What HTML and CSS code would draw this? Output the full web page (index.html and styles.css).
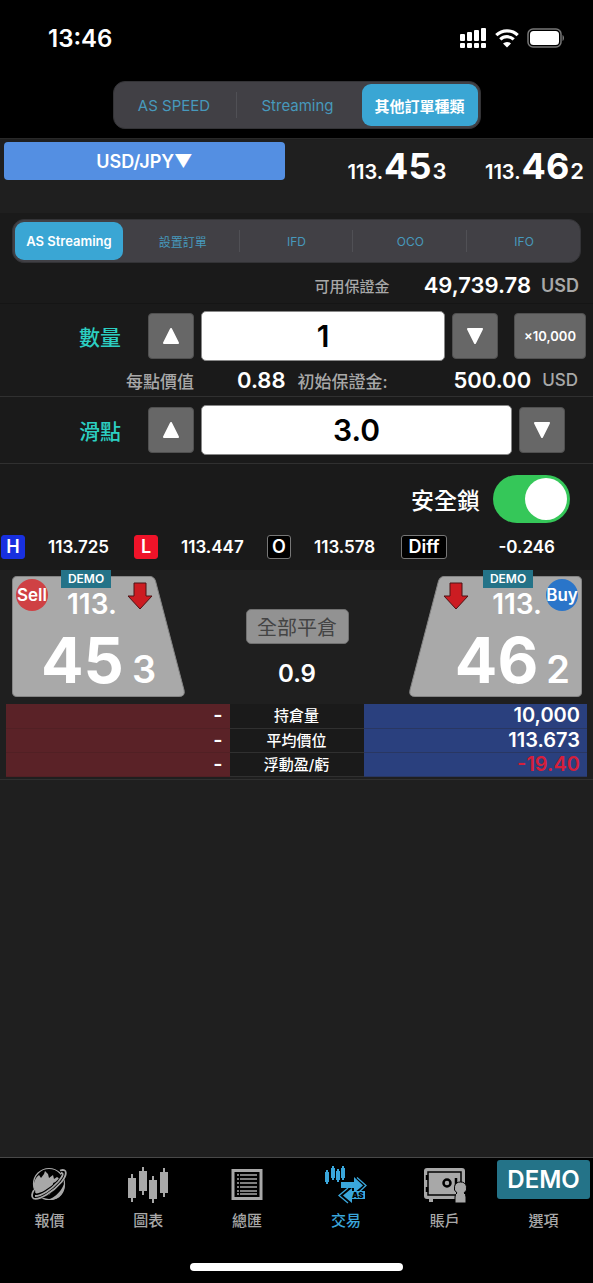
FILE: index.html
```html
<!DOCTYPE html>
<html lang="zh-Hant">
<head>
<meta charset="utf-8">
<meta name="viewport" content="width=device-width, initial-scale=1">
<title>交易</title>
<link rel="stylesheet" href="styles.css">
</head>
<body>
<div class="app">
  <header class="topbar">
    <div class="status">
      <time class="clock">13:46</time>
      <div class="status-icons">
        <svg width="27" height="22" viewBox="0 0 27 22" fill="#fff" aria-hidden="true">
          <rect x="0" y="7" width="5" height="7" rx="1"/><rect x="7" y="5" width="5" height="9" rx="1"/><rect x="14" y="3" width="5" height="11" rx="1"/><rect x="21" y="1" width="5" height="13" rx="1"/>
          <rect x="0" y="16" width="5" height="5" rx="1"/><rect x="7" y="16" width="5" height="5" rx="1"/><rect x="14" y="16" width="5" height="5" rx="1"/><rect x="21" y="16" width="5" height="5" rx="1"/>
        </svg>
        <svg width="24" height="20" viewBox="0 0 24 20" aria-hidden="true">
          <path d="M1.3 7.2a15.5 15.5 0 0 1 21.4 0M5.3 11.4a9.7 9.7 0 0 1 13.4 0" fill="none" stroke="#fff" stroke-width="3.2"/>
          <path d="M12 19.6l-4-4a5.7 5.7 0 0 1 8 0z" fill="#fff"/>
        </svg>
        <svg width="38" height="20" viewBox="0 0 38 20" aria-hidden="true">
          <rect x="1" y="1" width="33" height="18" rx="5" fill="none" stroke="#777" stroke-width="1.5"/>
          <rect x="3" y="3" width="29" height="14" rx="3.5" fill="#fff"/>
          <path d="M35.5 7v6c2-1 2-5 0-6z" fill="#777"/>
        </svg>
      </div>
    </div>
    <nav class="segments segments-main">
      <button type="button">AS SPEED</button>
      <button type="button">Streaming</button>
      <button type="button" class="active">其他訂單種類</button>
    </nav>
  </header>

  <section class="quote">
    <select class="pair" aria-label="貨幣對"><option>USD/JPY▼</option></select>
    <div class="price">113.<b>45</b><i>3</i></div>
    <div class="price">113.<b>46</b><i>2</i></div>
  </section>

  <main class="order">
    <nav class="segments segments-order">
      <button type="button" class="active">AS Streaming</button>
      <button type="button">設置訂單</button>
      <button type="button">IFD</button>
      <button type="button">OCO</button>
      <button type="button">IFO</button>
    </nav>
    <div class="margin">
      <span class="caption">可用保證金</span>
      <strong class="amount">49,739.78</strong>
      <span class="currency">USD</span>
    </div>

    <div class="field-row">
      <label class="field-label" for="qty">數量</label>
      <button type="button" class="step" aria-label="增加數量"><svg width="18" height="18" viewBox="0 0 18 18"><path d="M9 2l7 14H2z"/></svg></button>
      <input class="field" id="qty" type="text" value="1">
      <button type="button" class="step" aria-label="減少數量"><svg width="18" height="18" viewBox="0 0 18 18"><path d="M9 16l7-14H2z"/></svg></button>
      <button type="button" class="step unit">×10,000</button>
    </div>
    <div class="details">
      <span class="caption pip">每點價值</span>
      <strong class="amount pip-value">0.88</strong>
      <span class="caption">初始保證金:</span>
      <strong class="amount initial">500.00</strong>
      <span class="currency">USD</span>
    </div>

    <div class="field-row slip">
      <label class="field-label" for="slip">滑點</label>
      <button type="button" class="step" aria-label="增加滑點"><svg width="18" height="18" viewBox="0 0 18 18"><path d="M9 2l7 14H2z"/></svg></button>
      <input class="field" id="slip" type="text" value="3.0">
      <button type="button" class="step" aria-label="減少滑點"><svg width="18" height="18" viewBox="0 0 18 18"><path d="M9 16l7-14H2z"/></svg></button>
    </div>

    <div class="lock">
      <label for="lock">安全鎖</label>
      <input id="lock" class="switch" type="checkbox" checked>
    </div>

    <div class="stats">
      <div class="stat"><span class="tag high">H</span><span>113.725</span></div>
      <div class="stat"><span class="tag low">L</span><span>113.447</span></div>
      <div class="stat"><span class="tag">O</span><span>113.578</span></div>
      <div class="stat change"><span class="tag diff">Diff</span><span>-0.246</span></div>
    </div>
  </main>

  <section class="deal">
    <button type="button" class="ticket sell">
      <svg class="shape" viewBox="0 0 173 121" preserveAspectRatio="none" aria-hidden="true"><path d="M5 0.500H138Q142 0.500 143.500 5L172 114Q173.500 120.500 167 120.500H5Q0.500 120.500 0.500 116V5Q0.500 0.500 5 0.500Z"/></svg>
      <span class="demo">DEMO</span>
      <span class="ticket-top"><span class="side">Sell</span><span class="handle">113.</span>
        <svg class="arrow" width="26" height="28" viewBox="0 0 26 28"><path d="M7 1H19V14H25L13 27L1 14H7Z"/></svg></span>
      <span class="ticket-price"><b>45</b><i>3</i></span>
    </button>
    <div class="center">
      <button type="button" class="close-all">全部平倉</button>
      <span class="spread">0.9</span>
    </div>
    <button type="button" class="ticket buy">
      <svg class="shape" viewBox="0 0 173 121" preserveAspectRatio="none" aria-hidden="true"><path d="M168 0.500H35Q31 0.500 29.500 5L1 114Q-0.500 120.500 6 120.500H168Q172.500 120.500 172.500 116V5Q172.500 0.500 168 0.500Z"/></svg>
      <span class="demo">DEMO</span>
      <span class="ticket-top"><svg class="arrow" width="26" height="28" viewBox="0 0 26 28"><path d="M7 1H19V14H25L13 27L1 14H7Z"/></svg>
        <span class="handle">113.</span><span class="side">Buy</span></span>
      <span class="ticket-price"><b>46</b><i>2</i></span>
    </button>
  </section>

  <section class="holdings">
    <table>
      <tr><td class="short">-</td><th>持倉量</th><td class="long">10,000</td></tr>
      <tr><td class="short">-</td><th>平均價位</th><td class="long">113.673</td></tr>
      <tr><td class="short">-</td><th>浮動盈/虧</th><td class="long loss">-19.40</td></tr>
    </table>
  </section>

  <footer class="tabbar">
    <nav class="tabs">
      <a href="#quotes"><svg width="38" height="38" viewBox="0 0 38 38" fill="none" stroke="currentColor" aria-hidden="true">
        <circle cx="19" cy="18" r="15.500" stroke-width="1.200"/>
        <path d="M4 22C3 16 6 11 9 9L11 12L14 8L15 5L18 8L19 12L23 9L24 13L27 11L30 13L29 17L26 16L23 17L24 21L27 22L19 29L8 32Z" fill="currentColor" stroke="none"/>
        <path d="M18 34C26 31 32 24 34.500 17C36 27 29 35 18 34Z" fill="currentColor" stroke="none"/>
        <path d="M30 4.500C38 2 36 9 31 16C23 26 9 34 3.500 32C1 30.500 2 27 4 24M31 7C35 5 33 10 29 15C21 24 10 30 5 29" stroke="#000" stroke-width="3.500"/>
        <path d="M30 4.500C38 2 37 9 31.500 16C23 26 9 34.500 3.500 32.500C1 31 2 27 4 24M5 30C11 30 21 24 28.500 15.500C33 10 34 7 31 7" stroke-width="1.800"/>
      </svg><span>報價</span></a>
      <a href="#charts"><svg width="42" height="38" viewBox="0 0 42 38" fill="currentColor" aria-hidden="true">
        <rect x="1" y="12" width="8" height="20"/><rect x="4" y="8" width="2" height="28"/>
        <rect x="12" y="5" width="8" height="20"/><rect x="15" y="1" width="2" height="28"/>
        <rect x="22" y="14" width="8" height="19"/><rect x="25" y="10" width="2" height="27"/>
        <rect x="33" y="6" width="8" height="21"/><rect x="36" y="2" width="2" height="29"/>
      </svg><span>圖表</span></a>
      <a href="#summary"><svg width="32" height="38" viewBox="0 0 32 38" aria-hidden="true">
        <rect x="2" y="4.500" width="28" height="28" fill="none" stroke="currentColor" stroke-width="3"/>
        <path d="M6 9H8M6 13H8M6 17H8M6 21H8M6 25H8M6 28H8M9 9H26M9 13H26M9 17H26M9 21H26M9 25H26M9 28H26" stroke="currentColor" stroke-width="1.500"/>
      </svg><span>總匯</span></a>
      <a href="#trade" class="current"><svg width="44" height="38" viewBox="0 0 44 38" fill="currentColor" aria-hidden="true">
        <rect x="1" y="6" width="4" height="10"/><rect x="2" y="4" width="2" height="14"/>
        <rect x="7" y="2" width="4" height="10"/><rect x="8" y="0" width="2" height="14"/>
        <rect x="12" y="5" width="4" height="9"/><rect x="13" y="3" width="2" height="13"/>
        <rect x="17" y="2" width="4" height="10"/><rect x="18" y="0" width="2" height="14"/>
        <path d="M17 16H30V11L39 19.500L30 27V22H17Z"/>
        <path d="M33 11.500L42 19.500L34 27" fill="none" stroke="currentColor" stroke-width="1.300"/>
        <path d="M41 25V33H28V37L19 29.500L28 22V25Z"/>
        <path d="M24 22L15 29.500L24 37" fill="none" stroke="currentColor" stroke-width="1.300"/>
        <text x="28" y="32" class="icon-text">AS</text>
      </svg><span>交易</span></a>
      <a href="#account"><svg width="44" height="38" viewBox="0 0 44 38" aria-hidden="true">
        <path d="M4 2H39Q42 2 42 5V33H10V36H6V33H4Q1 33 1 30V5Q1 2 4 2Z" fill="currentColor"/>
        <rect x="5" y="6" width="33" height="23" fill="none" stroke="#000" stroke-width="1.500"/>
        <path d="M4 9V14M4 21V26M33 12V20" stroke="#000" stroke-width="2.500"/>
        <circle cx="24" cy="17" r="3.500" fill="none" stroke="#000" stroke-width="2.500"/>
        <path d="M37.500 16A6 6 0 0 1 41 27Q43 28 43 31V37H32V31Q32 28 34 27A6 6 0 0 1 37.500 16Z" fill="currentColor" stroke="#000" stroke-width="1"/>
      </svg><span>賬戶</span></a>
      <a href="#options"><strong class="demo-icon">DEMO</strong><span>選項</span></a>
    </nav>
    <div class="home"></div>
  </footer>
</div>
</body>
</html>
```
FILE: styles.css
```css
* { box-sizing: border-box; }
body {
  margin: 0;
  background: #1f1f1f;
  color: #fff;
  font-family: Inter, "Noto Sans CJK TC", sans-serif;
  font-size: 16px;
}
button, input, select { margin: 0; padding: 0; border: 0; font: inherit; color: inherit; }
b, i { font-style: normal; font-weight: inherit; }
.app { display: flex; flex-direction: column; min-height: 100vh; }

.topbar { display: flex; flex-direction: column; align-items: center; background: #000; padding-bottom: 9px; }
.status { display: flex; align-items: center; justify-content: space-between; width: 100%; height: 76px; padding: 0 28px 0 48px; }
.clock { font-size: 24px; font-weight: 600; }
.status-icons { display: flex; align-items: center; gap: 8px; }

.segments { display: grid; background: #414045; border: 1px solid #333336; color: #4799bc; }
.segments button { position: relative; background: none; border-radius: 9px; white-space: nowrap; }
.segments button.active { background: #3aa6d4; color: #fff; font-weight: 600; }
.segments button:not(.active):not(:last-child)::after { content: ""; position: absolute; right: -3px; top: 20%; bottom: 20%; width: 1px; background: #505055; }
.segments-main { grid-template-columns: 119px 120px 116px; gap: 4px; height: 48px; margin-top: 5px; padding: 2px 2px 2px 1px; border-radius: 12px; font-size: 15px; }
.segments-main button:nth-child(2)::after { display: none; }
.segments-order { grid-template-columns: repeat(5, 1fr); gap: 6px; height: 44px; margin: 0 12px; padding: 2px; border-radius: 12px; font-size: 12px; }
.segments-order .active { font-size: 13px; }

.quote { display: flex; justify-content: space-between; align-items: flex-start; height: 75px; padding: 3px 9px 0 4px; border-top: 1px solid #292929; }
.pair { flex: 0 0 281px; height: 38px; border-radius: 4px; appearance: none; background: #548fe2; font-size: 18px; font-weight: 600; text-align: center; text-align-last: center; }
.price { display: flex; align-items: baseline; gap: 1px; line-height: 48px; font-size: 20px; font-weight: 600; }
.pair + .price { margin-left: 24px; }
.price b { font-size: 36px; font-weight: 700; }
.price i { font-size: 22px; }

.order { background: #1a1a1a; padding-top: 6px; }
.margin, .details { display: flex; align-items: center; }
.margin { justify-content: flex-end; height: 41px; padding: 4px 14px 0 0; border-bottom: 1px solid #151515; }
.caption { font-size: 15px; color: #a8a8a8; font-weight: 500; }
.amount { font-size: 22px; font-weight: 600; }
.margin .amount { margin: 0 10px 0 34px; }
.currency { font-size: 18px; font-weight: 600; color: #a8a8a8; }

.field-row { display: flex; align-items: center; gap: 7px; padding: 7px 7px 0 0; }
.field-label { flex: 0 0 141px; padding-right: 20px; text-align: right; font-size: 21px; font-weight: 500; color: #2ccfc2; }
.step { display: flex; align-items: center; justify-content: center; flex: 0 0 46px; height: 46px; border: 1px solid #505050; border-radius: 4px; background: #676767; }
.step svg { fill: #fff; stroke: #fff; stroke-width: 2; stroke-linejoin: round; }
.step.unit { flex-basis: 72px; margin-left: 9px; font-size: 13px; font-weight: 600; }
.field { flex: 1; min-width: 0; height: 50px; border: 1px solid #888; border-radius: 5px; background: #fff; color: #000; text-align: center; font-size: 30px; font-weight: 600; }
.details { height: 36px; padding: 3px 15px 0 126px; border-bottom: 1px solid #303030; }
.details .caption { font-size: 17px; }
.pip-value { margin: 0 12px 0 43px; }
.initial { margin: 0 11px 0 auto; }
.details .currency { font-size: 17px; font-weight: 500; }
.slip { padding: 8px 28px 8px 0; border-bottom: 1px solid #303030; }

.lock { display: flex; align-items: center; justify-content: flex-end; gap: 13px; height: 70px; padding: 0 23px 0 0; font-size: 23px; font-weight: 500; }
.switch { appearance: none; width: 77px; height: 48px; padding: 3px; border-radius: 24px; background: #555; }
.switch:checked { background: #35c759; }
.switch::before { content: ""; display: block; width: 42px; height: 42px; border-radius: 50%; background: #fff; }
.switch:checked::before { margin-left: auto; }

.stats { display: grid; grid-template-columns: 133fr 133fr 134fr 192fr; height: 36px; padding: 0 0 11px 1px; font-size: 17px; font-weight: 600; }
.stat { display: flex; align-items: center; gap: 23px; }
.change { justify-content: space-between; padding-right: 38px; }
.tag { display: flex; align-items: center; justify-content: center; flex: 0 0 24px; height: 24px; border: 1px solid #777; border-radius: 3px; background: #000; font-size: 18px; }
.tag.high { background: #1830df; border-color: #1830df; }
.tag.low { background: #ef1329; border-color: #ef1329; }
.tag.diff { flex-basis: 46px; }

.deal { display: flex; justify-content: space-between; padding: 6px 11px 7px 12px; }
.ticket { position: relative; display: flex; flex-direction: column; width: 173px; height: 121px; background: none; color: #fff; }
.shape { position: absolute; inset: 0; width: 100%; height: 100%; }
.shape path { fill: #a9a9a9; stroke: #858585; }
.demo { position: absolute; top: -6px; left: 49px; width: 50px; background: #247388; font-size: 12px; font-weight: 600; line-height: 18px; text-align: center; }
.buy .demo { left: 74px; }
.ticket-top { position: relative; display: flex; align-items: flex-start; width: 100%; height: 46px; padding: 3px 0 0 4px; }
.side { display: flex; align-items: center; justify-content: center; flex: 0 0 32px; height: 32px; border-radius: 50%; background: #cf4144; font-size: 17px; font-weight: 600; }
.buy .side { background: #2a75c9; }
.handle { padding-top: 8px; font-size: 28px; font-weight: 600; line-height: 34px; }
.sell .handle { margin-left: 19px; }
.sell .arrow { margin: 3px 0 0 10px; }
.buy .ticket-top { justify-content: flex-end; padding: 3px 4px 0 0; }
.buy .handle { margin: 0 4px 0 23px; }
.buy .arrow { margin-top: 3px; }
.arrow { fill: #cc1c22; stroke: #4d1214; stroke-width: 1; }
.ticket-price { position: relative; display: flex; align-items: baseline; gap: 8px; width: 100%; padding: 0 29px; font-size: 38px; font-weight: 600; line-height: 78px; }
.ticket-price b { font-size: 63px; font-weight: 700; }
.buy .ticket-price { justify-content: flex-end; padding: 0 12px; }
.center { display: flex; flex-direction: column; align-items: center; gap: 15px; padding-top: 33px; }
.close-all { width: 103px; height: 35px; border: 1px solid #707070; border-radius: 5px; background: #929292; color: #444; font-size: 20px; }
.spread { font-size: 24px; font-weight: 600; line-height: 30px; }

.holdings { padding: 0 6px 2px; border-bottom: 1px solid #303030; }
table { width: 100%; table-layout: fixed; border-collapse: collapse; }
td, th { height: 24px; padding: 0 7px; border-bottom: 1px solid #303030; line-height: 23px; }
th { width: 134px; padding: 0; background: #1a1a1a; font-size: 15px; font-weight: 500; }
td { text-align: right; font-size: 20px; font-weight: 600; }
.short { background: #5a2227; border-color: #512024; }
.long { background: #2a407e; border-color: #293762; }
.loss { color: #d51f3b; }

.tabbar { margin-top: auto; background: #000; border-top: 1px solid #484848; padding-bottom: 12px; }
.tabs { display: grid; grid-template-columns: repeat(6, 1fr); height: 105px; padding-top: 2px; }
.tabs a { display: flex; flex-direction: column; align-items: center; gap: 7px; color: #a8a8a8; text-decoration: none; font-size: 15px; font-weight: 500; line-height: 20px; }
.tabs svg { margin-top: 6px; }
.tabs a.current { color: #3aa6db; }
.icon-text { fill: #000; font-size: 8px; font-weight: 900; }
.demo-icon { width: 93px; height: 39px; margin-bottom: 5px; border-radius: 3px; background: #247388; color: #fff; font-size: 24px; font-weight: 600; line-height: 39px; text-align: center; }
.home { width: 36%; height: 8px; margin: 0 auto; border-radius: 4px; background: #fff; }
```
